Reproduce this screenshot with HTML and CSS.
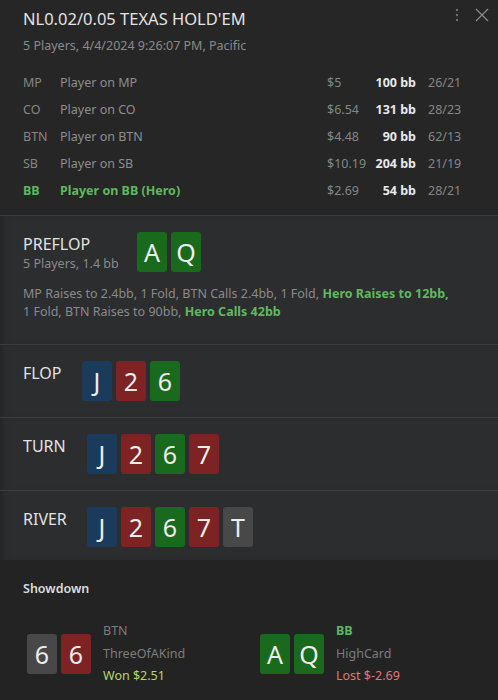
FILE: index.html
```html
<!DOCTYPE html>
<html lang="en">
<head>
    <meta charset="UTF-8">
    <meta name="viewport" content="width=device-width, initial-scale=1.0">
    <title>Hand Replay</title>
    <link rel="stylesheet" href="styles.css">
</head>
<body>
    <div class="panel">
        <div class="head">
            <div class="tools">
                <svg class="kebab" width="6" height="16" viewBox="0 0 6 16"><circle cx="3" cy="3" r="1.2"/><circle cx="3" cy="8" r="1.2"/><circle cx="3" cy="13" r="1.2"/></svg>
                <svg class="close" width="16" height="16" viewBox="0 0 16 16"><path d="M2 2 L14 14 M14 2 L2 14"/></svg>
            </div>
            <h1 class="title">NL0.02/0.05 TEXAS HOLD'EM</h1>
            <div class="sub">5 Players, 4/4/2024 9:26:07 PM, Pacific</div>

            <div class="players">
                <div class="row">
                    <span class="pos">MP</span><span class="name">Player on MP</span>
                    <span class="cash">$5</span><span class="bb">100 bb</span><span class="stat">26/21</span>
                </div>
                <div class="row">
                    <span class="pos">CO</span><span class="name">Player on CO</span>
                    <span class="cash">$6.54</span><span class="bb">131 bb</span><span class="stat">28/23</span>
                </div>
                <div class="row">
                    <span class="pos">BTN</span><span class="name">Player on BTN</span>
                    <span class="cash">$4.48</span><span class="bb">90 bb</span><span class="stat">62/13</span>
                </div>
                <div class="row">
                    <span class="pos">SB</span><span class="name">Player on SB</span>
                    <span class="cash">$10.19</span><span class="bb">204 bb</span><span class="stat">21/19</span>
                </div>
                <div class="row hero">
                    <span class="pos">BB</span><span class="name">Player on BB (Hero)</span>
                    <span class="cash">$2.69</span><span class="bb">54 bb</span><span class="stat">28/21</span>
                </div>
            </div>
        </div>

        <div class="street preflop">
            <div class="street-top">
                <div class="pre-label">
                    <div class="street-name">PREFLOP</div>
                    <div class="street-sub">5 Players, 1.4 bb</div>
                </div>
                <div class="cards">
                    <span class="card green">A</span><span class="card green">Q</span>
                </div>
            </div>
            <p class="actions">MP Raises to 2.4bb, 1 Fold, BTN Calls 2.4bb, 1 Fold, <b>Hero Raises to 12bb,</b><br>1 Fold, BTN Raises to 90bb, <b>Hero Calls 42bb</b></p>
        </div>

        <div class="street">
            <div class="street-top">
                <div class="street-name w-flop">FLOP</div>
                <div class="cards">
                    <span class="card blue">J</span><span class="card red">2</span><span class="card green">6</span>
                </div>
            </div>
        </div>

        <div class="street">
            <div class="street-top">
                <div class="street-name w-turn">TURN</div>
                <div class="cards">
                    <span class="card blue">J</span><span class="card red">2</span><span class="card green">6</span><span class="card red">7</span>
                </div>
            </div>
        </div>

        <div class="street last">
            <div class="street-top">
                <div class="street-name w-turn">RIVER</div>
                <div class="cards">
                    <span class="card blue">J</span><span class="card red">2</span><span class="card green">6</span><span class="card red">7</span><span class="card grey">T</span>
                </div>
            </div>
        </div>

        <div class="showdown">
            <div class="sd-title">Showdown</div>
            <div class="sd-hands">
                <div class="sd-hand">
                    <div class="cards">
                        <span class="card grey">6</span><span class="card red">6</span>
                    </div>
                    <div class="sd-info">
                        <div>BTN</div>
                        <div>ThreeOfAKind</div>
                        <div class="won">Won $2.51</div>
                    </div>
                </div>
                <div class="sd-hand">
                    <div class="cards">
                        <span class="card green">A</span><span class="card green">Q</span>
                    </div>
                    <div class="sd-info">
                        <div class="hero-pos">BB</div>
                        <div>HighCard</div>
                        <div class="lost">Lost $-2.69</div>
                    </div>
                </div>
            </div>
        </div>
    </div>
</body>
</html>
```

FILE: styles.css
```css
body{
    margin: 0;
    background: #262626;
    font-family: "Noto Sans", "Open Sans", sans-serif;
    color: #8c8c8c;
}
.panel{
    width: 498px;
    min-height: 700px;
    background: #262626;
}
.head{
    position: relative;
    padding: 8px 23px 11px 23px;
}
.tools{
    position: absolute;
    top: 7px;
    right: 8px;
    display: flex;
    align-items: center;
    gap: 14px;
}
.kebab{
    fill: #6e6e6e;
}
.close{
    stroke: #8a8a8a;
    stroke-width: 1.3;
    fill: none;
}
.title{
    margin: 0;
    font-size: 16.5px;
    font-weight: 400;
    color: #e2e2e2;
    line-height: 22px;
}
.sub{
    font-size: 12.5px;
    line-height: 18px;
    margin-top: 7px;
    color: #8a8a8a;
}
.players{
    margin-top: 14px;
}
.row{
    display: grid;
    grid-template-columns: 37px 267px 46px 43px 1fr;
    font-size: 12.5px;
    line-height: 27px;
    color: #858585;
}
.name{
    color: #8e8e8e;
}
.bb{
    text-align: right;
    font-weight: 700;
    color: #e8e8e8;
}
.stat{
    padding-left: 12px;
}
.hero .pos, .hero .name{
    color: #5fb85f;
    font-weight: 700;
}
.street{
    background: #2c2d2f;
    border-top: 1px solid #3c3c3e;
    padding: 17px 23px 16px 23px;
    box-shadow: inset 6px 0 8px -6px rgba(0,0,0,0.35);
}
.street.preflop{
    padding-bottom: 23px;
}
.street.last{
    padding-bottom: 13px;
}
.street-top{
    display: flex;
    align-items: flex-start;
}
.street-top .cards{
    margin-top: -1px;
}
.pre-label{
    width: 114px;
}
.street-name{
    font-size: 16px;
    line-height: 22px;
    color: #e2e2e2;
}
.w-flop{
    width: 59px;
}
.w-turn{
    width: 64px;
}
.street-sub{
    font-size: 12.5px;
    line-height: 18px;
    color: #8a8a8a;
}
.cards{
    display: flex;
    gap: 4px;
}
.card{
    width: 30px;
    height: 40px;
    border-radius: 3px;
    display: flex;
    align-items: center;
    justify-content: center;
    font-size: 25px;
    color: #ededed;
}
.green{
    background: #1a6a1e;
}
.red{
    background: #7d2323;
}
.blue{
    background: #1b3b5d;
}
.grey{
    background: #484848;
}
.actions{
    margin: 12px 0 0 0;
    font-size: 12.5px;
    line-height: 18px;
    color: #8a8a8a;
}
.actions b{
    color: #5fb85f;
}
.showdown{
    background: #232323;
    padding: 20px 23px 20px 23px;
}
.sd-title{
    font-size: 12.5px;
    font-weight: 600;
    color: #dcdcdc;
    line-height: 18px;
}
.sd-hands{
    display: flex;
    margin-top: 22px;
    padding-left: 4px;
}
.sd-hand{
    display: flex;
    align-items: center;
    flex: none;
    width: 233px;
}
.sd-info{
    margin-left: 12px;
    font-size: 12.5px;
    line-height: 22.5px;
    color: #7c7c7c;
}
.hero-pos{
    color: #5fb85f;
    font-weight: 700;
}
.won{
    color: #b2d86a;
}
.lost{
    color: #e07575;
}
```
